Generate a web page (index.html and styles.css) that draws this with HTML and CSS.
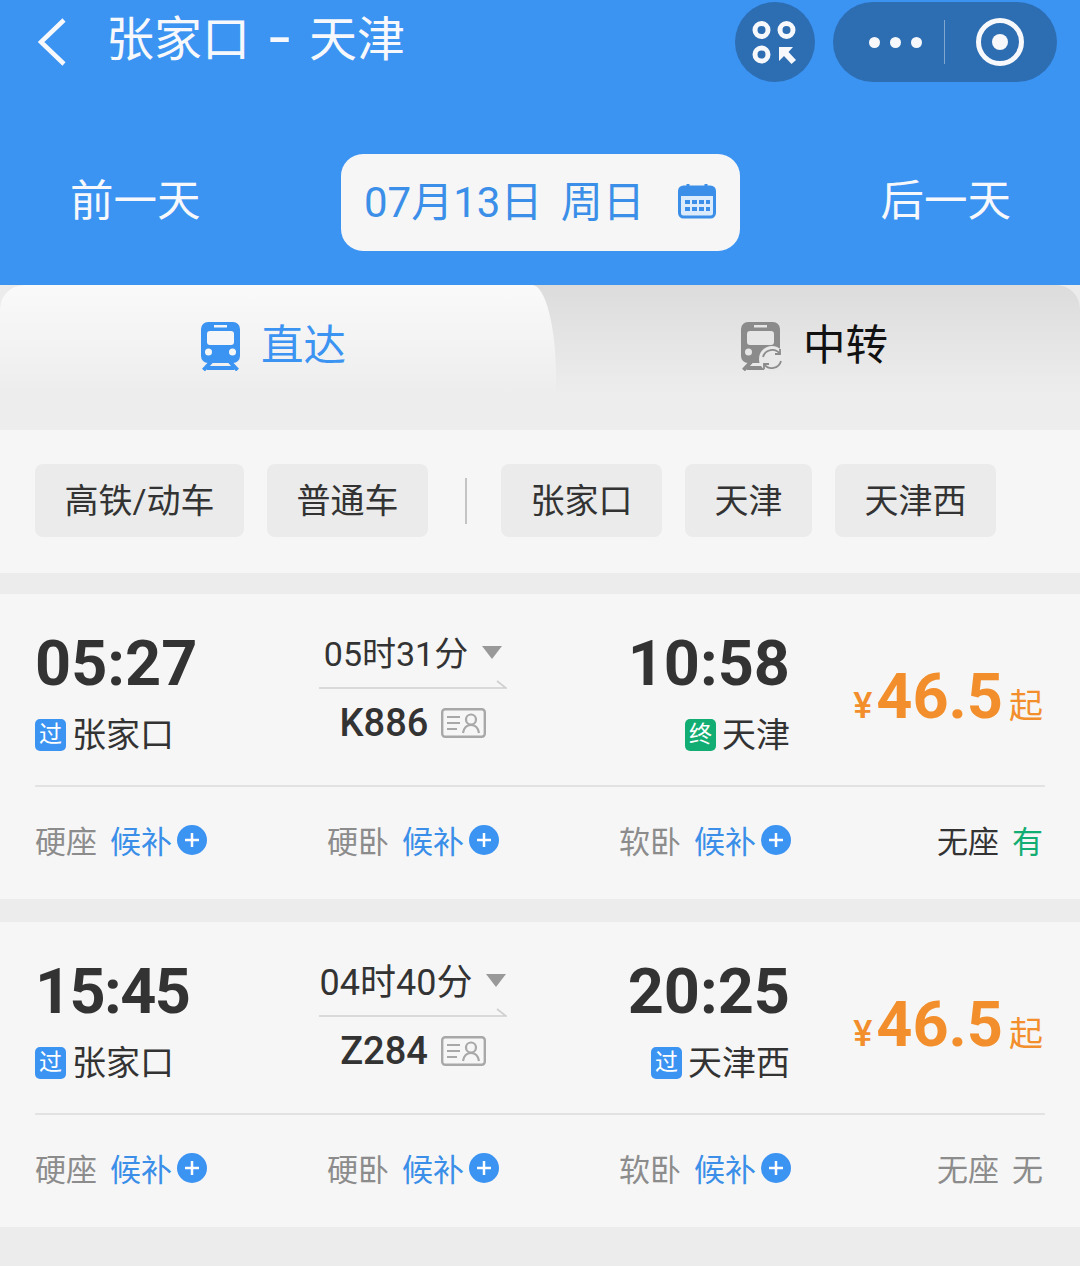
FILE: index.html
```html
<!DOCTYPE html>
<html lang="zh-CN">
<head>
    <meta charset="UTF-8">
    <title>张家口 - 天津</title>
    <link rel="stylesheet" href="styles.css">
</head>
<body>
    <svg class="defs" width="0" height="0">
        <symbol id="plus" viewBox="0 0 30 30">
            <circle cx="15" cy="15" r="15" fill="#3b93f2"/>
            <path d="M8 15H22M15 8V22" stroke="#fff" stroke-width="2.5" fill="none"/>
        </symbol>
        <symbol id="idcard" viewBox="0 0 45 30">
            <rect x="1.2" y="1.2" width="42.6" height="27.6" rx="3" fill="none" stroke="#a8a8a8" stroke-width="2.4"/>
            <path d="M6 9H19M6 15H19M6 21H16" stroke="#a8a8a8" stroke-width="2.2" fill="none"/>
            <circle cx="30" cy="11.5" r="5" fill="none" stroke="#a8a8a8" stroke-width="2.2"/>
            <path d="M22 25C23 19 26 17 30 17S37 19 38 25" fill="none" stroke="#a8a8a8" stroke-width="2.2"/>
        </symbol>
        <symbol id="rail-arrow" viewBox="0 0 188 10">
            <path d="M0 9H187L178 2" fill="none" stroke="#cfcfcf" stroke-width="1.6"/>
        </symbol>
    </svg>

    <!-- 顶部 -->
    <header class="top">
        <div class="navbar">
            <svg class="back" width="32" height="50" viewBox="0 0 32 50">
                <path d="M28 3L5 25L28 47" fill="none" stroke="#f6f8fb" stroke-width="4.5"/>
            </svg>
            <h1 class="title">张家口 <span class="title-dash">-</span> 天津</h1>
            <div class="capsule-round">
                <svg width="80" height="80" viewBox="0 0 80 80">
                    <g fill="none" stroke="#f6f8fb" stroke-width="5">
                        <circle cx="26.5" cy="28" r="6.5"/>
                        <circle cx="51.5" cy="28" r="6.5"/>
                        <circle cx="26.5" cy="52.5" r="6.5"/>
                    </g>
                    <path d="M44 45H58L53.5 50L61 58L56.5 62L49 54L44 59Z" fill="#f6f8fb"/>
                </svg>
            </div>
            <div class="capsule">
                <div class="capsule-dots"><i></i><i></i><i></i></div>
                <div class="capsule-line"></div>
                <svg width="52" height="52" viewBox="0 0 52 52">
                    <circle cx="26" cy="26" r="21.5" fill="none" stroke="#f6f8fb" stroke-width="5"/>
                    <circle cx="26" cy="26" r="8" fill="#f6f8fb"/>
                </svg>
            </div>
        </div>
        <div class="date-row">
            <span class="day-link">前一天</span>
            <div class="date-pill">
                <span class="date-text">07月13日 周日</span>
                <svg class="date-icon" width="38" height="36" viewBox="0 0 38 36">
                    <rect x="1.5" y="4" width="35" height="30" rx="4" fill="#dcebfb" stroke="#3b8fe8" stroke-width="3"/>
                    <path d="M1.5 8a4 4 0 0 1 4-4h27a4 4 0 0 1 4 4v5h-35z" fill="#3b8fe8"/>
                    <path d="M10 1v5M28 1v5" stroke="#3b8fe8" stroke-width="3"/>
                    <g fill="#3b8fe8">
                        <rect x="7" y="17" width="5" height="4"/><rect x="14" y="17" width="5" height="4"/>
                        <rect x="21" y="17" width="5" height="4"/><rect x="28" y="17" width="4" height="4"/>
                        <rect x="7" y="24" width="5" height="4"/><rect x="14" y="24" width="5" height="4"/>
                        <rect x="21" y="24" width="5" height="4"/><rect x="28" y="24" width="4" height="4"/>
                    </g>
                </svg>
            </div>
            <span class="day-link">后一天</span>
        </div>
    </header>

    <!-- 直达 / 中转 -->
    <div class="tabs">
        <div class="tab tab-active">
            <svg width="44" height="50" viewBox="0 0 44 50">
                <rect x="2" y="1" width="39" height="41" rx="7" fill="#3b93f2"/>
                <rect x="8" y="10" width="27" height="14" rx="3" fill="#f4f6f8"/>
                <rect x="15" y="4" width="13" height="2.5" fill="#f4f6f8"/>
                <circle cx="9.5" cy="31" r="3.5" fill="#f4f6f8"/>
                <circle cx="33.5" cy="31" r="3.5" fill="#f4f6f8"/>
                <path d="M12 41L4.5 49M31 41L38.5 49M8 47H35" stroke="#3b93f2" stroke-width="4" fill="none"/>
            </svg>
            <span>直达</span>
        </div>
        <div class="tab tab-other">
            <svg width="46" height="50" viewBox="0 0 46 50">
                <rect x="2" y="1" width="39" height="41" rx="7" fill="#8b8b8b"/>
                <rect x="8" y="10" width="27" height="14" rx="3" fill="#e6e6e6"/>
                <rect x="15" y="4" width="13" height="2.5" fill="#e6e6e6"/>
                <circle cx="9.5" cy="31" r="3.5" fill="#e6e6e6"/>
                <path d="M12 41L4.5 49M8 47H26" stroke="#8b8b8b" stroke-width="4" fill="none"/>
                <circle cx="33" cy="38" r="13" fill="#e8e8e8"/>
                <path d="M24 36A9.5 9.5 0 0 1 41 33M42 40A9.5 9.5 0 0 1 25 43" fill="none" stroke="#8b8b8b" stroke-width="1.8"/>
                <path d="M41 28V33H36M25 48V43H30" fill="none" stroke="#8b8b8b" stroke-width="1.8"/>
            </svg>
            <span>中转</span>
        </div>
    </div>

    <!-- 筛选 -->
    <div class="filters">
        <span class="chip">高铁/动车</span>
        <span class="chip">普通车</span>
        <span class="filter-line"></span>
        <span class="chip">张家口</span>
        <span class="chip">天津</span>
        <span class="chip">天津西</span>
    </div>

    <!-- 车次 1 -->
    <section class="train">
        <div class="train-main">
            <div class="stop">
                <div class="time">05:27</div>
                <div class="station"><b class="badge">过</b>张家口</div>
            </div>
            <div class="mid">
                <div class="duration">05时31分<i class="tri"></i></div>
                <svg class="rail" width="188" height="10"><use href="#rail-arrow"/></svg>
                <div class="train-no">K886<svg width="45" height="30"><use href="#idcard"/></svg></div>
            </div>
            <div class="stop stop-end">
                <div class="time">10:58</div>
                <div class="station"><b class="badge badge-green">终</b>天津</div>
            </div>
            <div class="price"><small class="yen">¥</small>46.5<small class="from">起</small></div>
        </div>
        <div class="seats">
            <div class="seat"><span class="seat-name">硬座</span><span class="wait">候补</span><svg width="30" height="30"><use href="#plus"/></svg></div>
            <div class="seat"><span class="seat-name">硬卧</span><span class="wait">候补</span><svg width="30" height="30"><use href="#plus"/></svg></div>
            <div class="seat"><span class="seat-name">软卧</span><span class="wait">候补</span><svg width="30" height="30"><use href="#plus"/></svg></div>
            <div class="seat seat-end"><span class="seat-name seat-dark">无座</span><span class="have">有</span></div>
        </div>
    </section>

    <!-- 车次 2 -->
    <section class="train train-second">
        <div class="train-main">
            <div class="stop">
                <div class="time time-tight">15:45</div>
                <div class="station"><b class="badge">过</b>张家口</div>
            </div>
            <div class="mid">
                <div class="duration duration-wide">04时40分<i class="tri"></i></div>
                <svg class="rail" width="188" height="10"><use href="#rail-arrow"/></svg>
                <div class="train-no">Z284<svg width="45" height="30"><use href="#idcard"/></svg></div>
            </div>
            <div class="stop stop-end">
                <div class="time">20:25</div>
                <div class="station"><b class="badge">过</b>天津西</div>
            </div>
            <div class="price"><small class="yen">¥</small>46.5<small class="from">起</small></div>
        </div>
        <div class="seats">
            <div class="seat"><span class="seat-name">硬座</span><span class="wait">候补</span><svg width="30" height="30"><use href="#plus"/></svg></div>
            <div class="seat"><span class="seat-name">硬卧</span><span class="wait">候补</span><svg width="30" height="30"><use href="#plus"/></svg></div>
            <div class="seat"><span class="seat-name">软卧</span><span class="wait">候补</span><svg width="30" height="30"><use href="#plus"/></svg></div>
            <div class="seat seat-end"><span class="seat-name">无座</span><span class="none">无</span></div>
        </div>
    </section>
</body>
</html>
```

FILE: styles.css
```css
body {
    margin: 0;
    height: 1266px;
    overflow: hidden;
    background-color: #ececec;
    font-family: "Roboto", "Noto Sans CJK SC", sans-serif;
    color: #333;
}
.defs {
    display: block;
    height: 0;
}
.top {
    height: 285px;
    background-color: #3b93f2;
    color: #f6f8fb;
}
.navbar {
    height: 80px;
    padding-top: 2px;
    display: flex;
    align-items: center;
}
.back {
    margin-left: 36px;
    flex: none;
}
.title {
    margin: 0 0 4px 38px;
    flex: 1;
    font-size: 48px;
    font-weight: 400;
    line-height: 60px;
    word-spacing: 8px;
    white-space: nowrap;
}
.title-dash {
    display: inline-block;
    margin: 0 3px;
    transform: translateY(-2px) scale(1.6, 1.3);
}
.capsule-round {
    width: 80px;
    height: 80px;
    border-radius: 50%;
    background-color: #2d6db2;
    flex: none;
}
.capsule-round svg {
    display: block;
}
.capsule {
    width: 224px;
    height: 80px;
    margin: 0 23px 0 18px;
    border-radius: 40px;
    background-color: #2d6db2;
    display: flex;
    align-items: center;
    flex: none;
}
.capsule-dots {
    display: flex;
    gap: 10px;
    margin-left: 36px;
}
.capsule-dots i {
    width: 11px;
    height: 11px;
    border-radius: 50%;
    background-color: #f6f8fb;
}
.capsule-line {
    width: 1px;
    height: 44px;
    margin: 0 29px 0 22px;
    background-color: rgba(255, 255, 255, 0.4);
}
.date-row {
    margin-top: 72px;
    padding: 0 69px 0 70px;
    display: flex;
    justify-content: space-between;
    align-items: center;
}
.day-link {
    font-size: 43.5px;
    line-height: 60px;
    margin-bottom: 2px;
}
.date-pill {
    width: 399px;
    height: 97px;
    box-sizing: border-box;
    padding: 0 24px 0 23px;
    border-radius: 22px;
    background-color: #f6f6f6;
    color: #3b8fe8;
    display: flex;
    justify-content: space-between;
    align-items: center;
}
.date-text {
    margin-bottom: 9px;
    font-size: 42px;
    word-spacing: 8px;
    white-space: pre;
}
.date-icon {
    margin-bottom: 4px;
}
.tabs {
    height: 145px;
    border-radius: 24px 24px 0 0;
    overflow: hidden;
    background: linear-gradient(#dcdcdc, #ededed 75%);
    display: flex;
}
.tab {
    display: flex;
    justify-content: center;
    gap: 18px;
    padding-top: 36px;
    box-sizing: border-box;
    font-size: 42.5px;
    line-height: 50px;
}
.tab-active {
    width: 556px;
    padding-right: 11px;
    border-top-right-radius: 24px 92px;
    background: linear-gradient(#fafafa, #ededed 75%);
    color: #3b93f2;
}
.tab-other {
    flex: 1;
    padding-right: 9px;
    color: #111;
}
.filters {
    height: 143px;
    box-sizing: border-box;
    padding: 34px 35px 0;
    background-color: #f6f6f6;
    display: flex;
    align-items: flex-start;
    gap: 23px;
}
.chip {
    height: 73px;
    padding: 0 29.5px;
    border-radius: 8px;
    background-color: #ebebeb;
    font-size: 34px;
    line-height: 75px;
    color: #333;
    white-space: nowrap;
}
.filter-line {
    width: 2px;
    height: 46px;
    margin: 14px 11px 0 14px;
    background-color: #c4c4c4;
}
.train {
    margin-top: 21px;
    height: 305px;
    box-sizing: border-box;
    padding: 39px 35px 0;
    background-color: #f6f6f6;
}
.train-second {
    margin-top: 23px;
}
.train-main {
    height: 152px;
    border-bottom: 2px solid #e2e2e2;
    display: grid;
    grid-template-columns: 284px 188px 283px 1fr;
}
.time {
    font-size: 63px;
    font-weight: 700;
    line-height: 62px;
    color: #333;
}
.time-tight {
    letter-spacing: -1.6px;
}
.station {
    margin-top: 20px;
    display: flex;
    align-items: center;
    gap: 6px;
    font-size: 34px;
    line-height: 40px;
}
.badge {
    width: 31px;
    height: 32px;
    border-radius: 5px;
    background-color: #3b93f2;
    color: #fff;
    font-size: 23px;
    font-weight: 400;
    line-height: 32px;
    text-align: center;
}
.badge-green {
    background-color: #12ad72;
}
.stop-end {
    display: flex;
    flex-direction: column;
    align-items: flex-end;
}
.mid {
    display: flex;
    flex-direction: column;
    align-items: center;
}
.duration {
    height: 40px;
    margin-top: -2px;
    display: flex;
    align-items: center;
    gap: 14px;
    font-size: 34px;
    white-space: nowrap;
}
.duration-wide {
    font-size: 36px;
}
.tri {
    width: 0;
    height: 0;
    margin-top: 3px;
    border-left: 10px solid transparent;
    border-right: 10px solid transparent;
    border-top: 13px solid #999;
}
.rail {
    margin-top: 8px;
    display: block;
}
.train-no {
    margin-top: 14px;
    display: flex;
    align-items: center;
    gap: 13px;
    font-size: 38px;
    font-weight: 500;
    line-height: 40px;
}
.price {
    padding: 26px 2px 0 0;
    text-align: right;
    font-size: 63px;
    font-weight: 700;
    line-height: 76px;
    color: #f28f2c;
    white-space: nowrap;
}
.yen {
    margin-right: 4px;
    font-size: 36px;
    font-weight: 500;
}
.from {
    margin-left: 6px;
    font-size: 34px;
    font-weight: 400;
}
.seats {
    padding-top: 33px;
    display: grid;
    grid-template-columns: 292px 292px 292px 1fr;
}
.seat {
    height: 40px;
    display: flex;
    align-items: center;
    font-size: 31px;
    white-space: nowrap;
}
.seat-name {
    margin: 0 13px 2px 0;
    color: #8c8c8c;
}
.seat-dark {
    color: #333;
}
.wait {
    margin: 0 5px 2px 0;
    color: #3b8fe8;
}
.seat-end {
    justify-content: flex-end;
    padding-right: 2px;
}
.have,
.none {
    margin-bottom: 2px;
}
.have {
    color: #12ad72;
}
.none {
    color: #8c8c8c;
}
```
